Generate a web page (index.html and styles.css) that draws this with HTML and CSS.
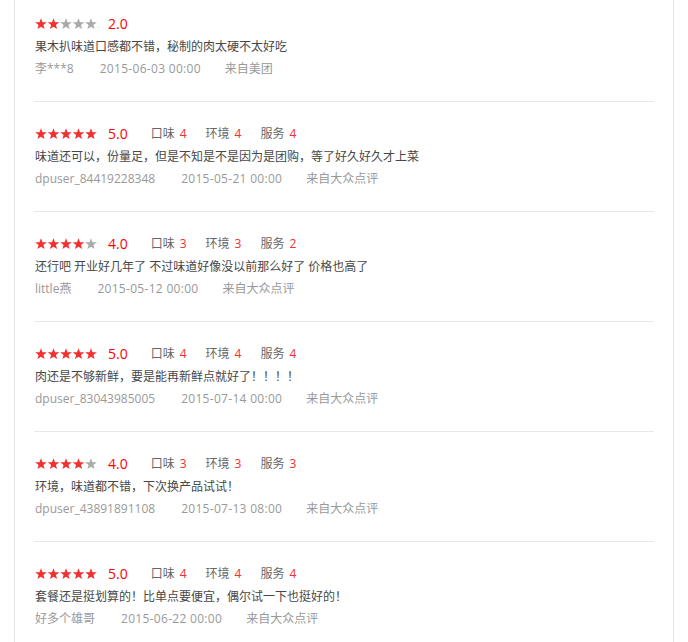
FILE: index.html
```html
<!DOCTYPE html>
<html lang="zh-CN">
<head>
<meta charset="utf-8">
<title>评价</title>
<link rel="stylesheet" href="styles.css">
</head>
<body>
<svg width="0" height="0" class="defs">
  <defs>
    <polygon id="star" points="6,0.2 7.5,4.15 11.8,4.3 8.4,6.95 9.6,11.1 6,8.7 2.4,11.1 3.6,6.95 0.2,4.3 4.5,4.15"/>
  </defs>
</svg>
<div class="panel">
  <ul class="reviews">
    <li class="review">
      <div class="rate-row">
        <span class="stars">
          <svg width="62" height="12" viewBox="0 0 62 12"><use href="#star" x="0" class="on"/><use href="#star" x="12.5" class="on"/><use href="#star" x="25" class="off"/><use href="#star" x="37.5" class="off"/><use href="#star" x="50" class="off"/></svg>
        </span>
        <span class="score">2.0</span>
      </div>
      <p class="text">果木扒味道口感都不错，秘制的肉太硬不太好吃</p>
      <div class="meta"><span class="user">李***8</span><span class="time">2015-06-03 00:00</span><span class="src">来自美团</span></div>
    </li>
    <li class="review">
      <div class="rate-row">
        <span class="stars">
          <svg width="62" height="12" viewBox="0 0 62 12"><use href="#star" x="0" class="on"/><use href="#star" x="12.5" class="on"/><use href="#star" x="25" class="on"/><use href="#star" x="37.5" class="on"/><use href="#star" x="50" class="on"/></svg>
        </span>
        <span class="score">5.0</span>
        <span class="sub">口味<em>4</em></span><span class="sub">环境<em>4</em></span><span class="sub">服务<em>4</em></span>
      </div>
      <p class="text">味道还可以，份量足，但是不知是不是因为是团购，等了好久好久才上菜</p>
      <div class="meta"><span class="user">dpuser_84419228348</span><span class="time">2015-05-21 00:00</span><span class="src">来自大众点评</span></div>
    </li>
    <li class="review">
      <div class="rate-row">
        <span class="stars">
          <svg width="62" height="12" viewBox="0 0 62 12"><use href="#star" x="0" class="on"/><use href="#star" x="12.5" class="on"/><use href="#star" x="25" class="on"/><use href="#star" x="37.5" class="on"/><use href="#star" x="50" class="off"/></svg>
        </span>
        <span class="score">4.0</span>
        <span class="sub">口味<em>3</em></span><span class="sub">环境<em>3</em></span><span class="sub">服务<em>2</em></span>
      </div>
      <p class="text">还行吧 开业好几年了 不过味道好像没以前那么好了 价格也高了</p>
      <div class="meta"><span class="user">little燕</span><span class="time">2015-05-12 00:00</span><span class="src">来自大众点评</span></div>
    </li>
    <li class="review">
      <div class="rate-row">
        <span class="stars">
          <svg width="62" height="12" viewBox="0 0 62 12"><use href="#star" x="0" class="on"/><use href="#star" x="12.5" class="on"/><use href="#star" x="25" class="on"/><use href="#star" x="37.5" class="on"/><use href="#star" x="50" class="on"/></svg>
        </span>
        <span class="score">5.0</span>
        <span class="sub">口味<em>4</em></span><span class="sub">环境<em>4</em></span><span class="sub">服务<em>4</em></span>
      </div>
      <p class="text">肉还是不够新鲜，要是能再新鲜点就好了！！！！</p>
      <div class="meta"><span class="user">dpuser_83043985005</span><span class="time">2015-07-14 00:00</span><span class="src">来自大众点评</span></div>
    </li>
    <li class="review">
      <div class="rate-row">
        <span class="stars">
          <svg width="62" height="12" viewBox="0 0 62 12"><use href="#star" x="0" class="on"/><use href="#star" x="12.5" class="on"/><use href="#star" x="25" class="on"/><use href="#star" x="37.5" class="on"/><use href="#star" x="50" class="off"/></svg>
        </span>
        <span class="score">4.0</span>
        <span class="sub">口味<em>3</em></span><span class="sub">环境<em>3</em></span><span class="sub">服务<em>3</em></span>
      </div>
      <p class="text">环境，味道都不错，下次换产品试试！</p>
      <div class="meta"><span class="user">dpuser_43891891108</span><span class="time">2015-07-13 08:00</span><span class="src">来自大众点评</span></div>
    </li>
    <li class="review">
      <div class="rate-row">
        <span class="stars">
          <svg width="62" height="12" viewBox="0 0 62 12"><use href="#star" x="0" class="on"/><use href="#star" x="12.5" class="on"/><use href="#star" x="25" class="on"/><use href="#star" x="37.5" class="on"/><use href="#star" x="50" class="on"/></svg>
        </span>
        <span class="score">5.0</span>
        <span class="sub">口味<em>4</em></span><span class="sub">环境<em>4</em></span><span class="sub">服务<em>4</em></span>
      </div>
      <p class="text">套餐还是挺划算的！比单点要便宜，偶尔试一下也挺好的！</p>
      <div class="meta"><span class="user">好多个雄哥</span><span class="time">2015-06-22 00:00</span><span class="src">来自大众点评</span></div>
    </li>
  </ul>
</div>
</body>
</html>
```
FILE: styles.css
```css
* { box-sizing: border-box; }
html, body { margin: 0; padding: 0; background: #fff; }
body {
  font-family: "Open Sans", "Noto Sans CJK SC", sans-serif;
  font-size: 12px;
  color: #444;
  height: 642px;
  overflow: hidden;
}
.defs { position: absolute; width: 0; height: 0; }
.panel {
  margin-left: 14px;
  width: 660px;
  min-height: 642px;
  border-left: 1px solid #e6e6e6;
  border-right: 1px solid #e6e6e6;
  padding: 0 19px;
}
.reviews { list-style: none; margin: 0; padding: 0; }
.review {
  padding: 22px 0 21px 1px;
  border-bottom: 1px solid #e8e8e8;
}
.review:first-child { padding-top: 14px; }
.rate-row {
  display: flex;
  align-items: center;
  height: 20px;
}
.stars { display: flex; width: 62px; height: 12px; margin-right: 11px; }
.stars svg { display: block; }
.stars .on { fill: #f23030; }
.stars .off { fill: #aaaaaa; }
.score {
  font-size: 14px;
  color: #ff0000;
  margin-right: 23px;
  line-height: 20px;
}
.sub {
  color: #666;
  margin-right: 19px;
  line-height: 20px;
}
.sub em { font-style: normal; color: #f23030; margin-left: 5px; }
.text {
  margin: 2px 0 0;
  line-height: 22px;
  color: #474747;
}
.meta {
  line-height: 22px;
  color: #999;
  display: flex;
}
.meta .user { margin-right: 26px; }
.meta .time { margin-right: 24px; letter-spacing: 0.3px; }
```
